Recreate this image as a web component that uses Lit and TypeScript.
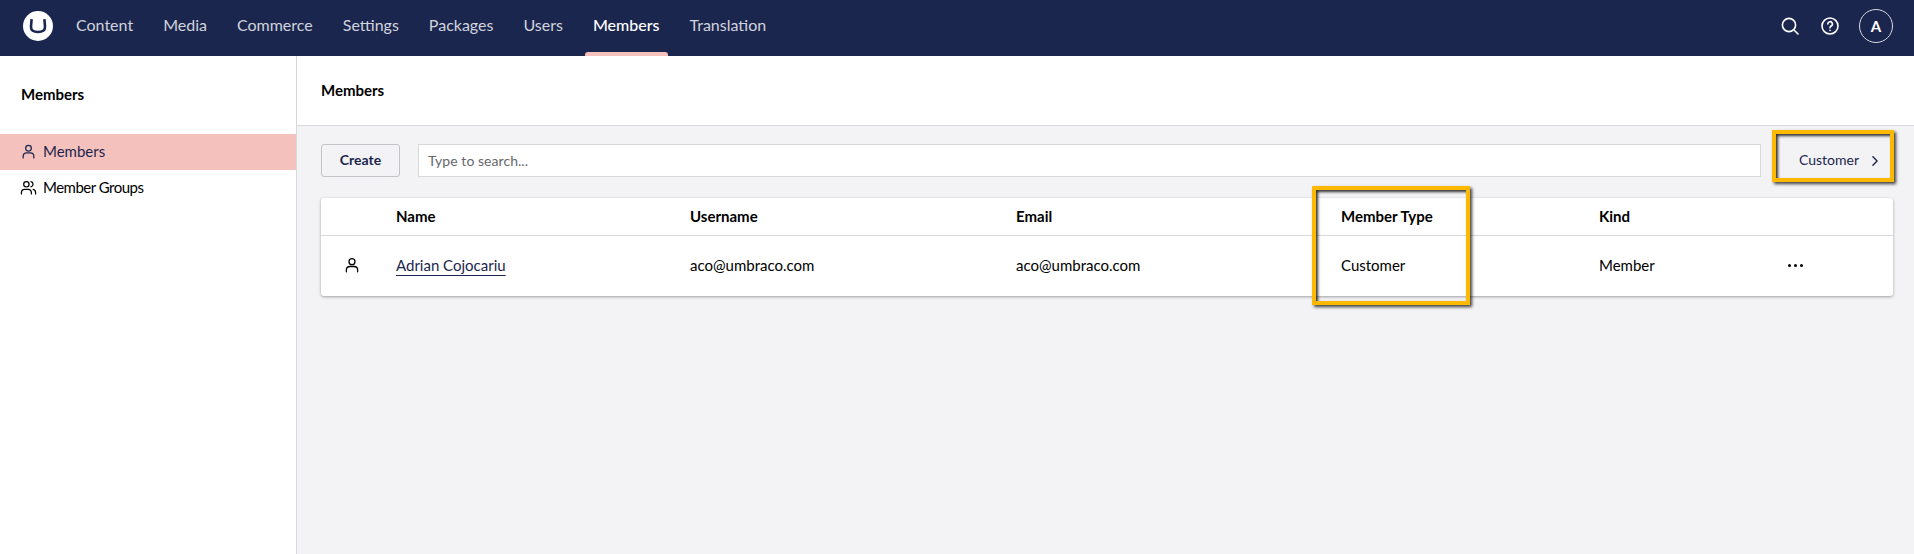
import { LitElement, html, css, svg } from "lit";
import { customElement } from "lit/decorators.js";

const person = svg`<circle cx="12" cy="7.5" r="4"/><path d="M4.5 21v-2.5c0-3 2.5-4.5 5-4.5h5c2.5 0 5 1.500 5 4.500V21"/>`;
const people = svg`<circle cx="9" cy="7.5" r="3.8"/><path d="M2 21v-2c0-3 2.2-4.500 4.500-4.500h5c2.300 0 4.500 1.500 4.500 4.500v2"/><path d="M15.500 3.800a3.800 3.800 0 0 1 0 7.400"/><path d="M18.500 14.600c2 .5 3.500 2 3.500 4.200V21"/>`;

const NAV = ["Content", "Media", "Commerce", "Settings", "Packages", "Users", "Members", "Translation"];
const COLUMNS = ["", "Name", "Username", "Email", "Member Type", "Kind", ""];

@customElement("app-root")
export class AppRoot extends LitElement {
  static override styles = css`
    :host {
      display: flex;
      flex-direction: column;
      height: 554px;
      overflow: hidden;
      font-family: Lato, "Noto Sans", sans-serif;
      font-size: 15px;
      color: #000;
      background: #f3f3f5;
    }
    svg {
      display: block;
      fill: none;
      stroke: currentColor;
      stroke-width: 1.75;
      stroke-linecap: round;
      stroke-linejoin: round;
    }

    /* top bar */
    .topbar {
      height: 56px;
      flex: none;
      display: flex;
      align-items: center;
      background: #1b264f;
      color: #fff;
      padding: 0 21px 4px 23px;
      box-sizing: border-box;
    }
    .logo {
      width: 30px;
      height: 30px;
      margin-right: 8px;
    }
    .logo svg {
      width: 100%;
      height: 100%;
      stroke: none;
    }
    .nav {
      display: flex;
      flex: 1;
      align-self: stretch;
      margin-bottom: -4px;
    }
    .nav-item {
      position: relative;
      display: flex;
      align-items: center;
      padding: 0 15px 7px;
      font-size: 16px;
      color: #d1d4dc;
    }
    .nav-item.active {
      color: #fff;
      font-weight: 500;
    }
    .nav-item.active::after {
      content: "";
      position: absolute;
      left: 7px;
      right: 7px;
      bottom: 0;
      height: 4px;
      background: #f5c1bc;
      border-radius: 3px 3px 0 0;
    }
    .tools {
      display: flex;
      align-items: center;
    }
    .tool {
      width: 18px;
      height: 18px;
      margin-right: 22px;
    }
    .tool svg {
      width: 100%;
      height: 100%;
      stroke-width: 1.6;
    }
    .tool.help {
      margin-right: 20px;
    }
    .avatar {
      width: 34px;
      height: 34px;
      box-sizing: border-box;
      border: 1.5px solid #d8d8de;
      border-radius: 50%;
      display: grid;
      place-items: center;
      font-size: 15px;
      font-weight: 700;
    }

    /* body */
    .main {
      flex: 1;
      display: flex;
      min-height: 0;
    }
    .sidebar {
      width: 297px;
      flex: none;
      box-sizing: border-box;
      background: #fff;
      border-right: 1px solid #d8d7d9;
      padding-top: 29px;
    }
    .sidebar h3 {
      margin: 0 0 31px;
      padding-left: 21px;
      font-size: 15px;
      line-height: 18px;
      font-weight: 700;
    }
    .menu-item {
      display: flex;
      align-items: center;
      height: 36px;
      box-sizing: border-box;
      padding: 0 0 2px 21px;
      color: #000;
    }
    .menu-item svg {
      width: 17px;
      height: 17px;
      margin-left: -1px;
      margin-right: 6px;
      flex: none;
    }
    .menu-item .tight {
      letter-spacing: -0.5px;
    }
    .menu-item.active {
      background: #f5c1bc;
      color: #1b264f;
    }

    .workspace {
      flex: 1;
      min-width: 0;
      display: flex;
      flex-direction: column;
    }
    .ws-header {
      height: 70px;
      flex: none;
      box-sizing: border-box;
      background: #fff;
      border-bottom: 1px solid #d8d7d9;
      padding: 0 24px 2px;
      display: flex;
      align-items: center;
      font-weight: 700;
    }
    .ws-body {
      padding: 18px 21px 0 24px;
    }

    .toolbar {
      display: flex;
      align-items: center;
      height: 33px;
      gap: 18px;
    }
    .create {
      width: 79px;
      height: 33px;
      box-sizing: border-box;
      display: grid;
      place-items: center;
      padding-bottom: 2px;
      background: #f3f3f5;
      border: 1px solid #c4c4c8;
      border-radius: 3px;
      color: #1b264f;
      font-weight: 700;
      font-size: 14px;
    }
    .search {
      flex: 1;
      height: 33px;
      box-sizing: border-box;
      background: #fff;
      border: 1px solid #d8d7d9;
      display: flex;
      align-items: center;
      padding-left: 9px;
      color: #68676b;
      font-size: 14px;
      letter-spacing: 0.05px;
    }
    .type-button {
      position: relative;
      width: 120px;
      height: 33px;
      margin-left: -6px;
      display: flex;
      align-items: center;
      box-sizing: border-box;
      padding: 0 0 2px 26px;
      gap: 11px;
      color: #1b264f;
      font-size: 14px;
    }
    .type-button svg {
      width: 10px;
      height: 10px;
      stroke-width: 1.7;
      margin-top: 2px;
    }

    /* yellow annotation frames drawn over the screenshot */
    .frame {
      position: absolute;
      box-sizing: border-box;
      border: 4.5px solid #fdb900;
      box-shadow: 2px 2px 3px rgba(0, 0, 0, 0.75),
        inset 2px 2px 3px rgba(0, 0, 0, 0.8);
      pointer-events: none;
    }
    .type-button .frame {
      left: -1px;
      right: -1px;
      top: -14px;
      bottom: -5px;
    }

    .table {
      position: relative;
      margin-top: 21px;
      background: #fff;
      border-radius: 3px;
      box-shadow: 0 1px 3px rgba(0, 0, 0, 0.35);
    }
    .row {
      display: grid;
      grid-template-columns: 75px 294px 326px 325px 258px 189px 1fr;
      align-items: center;
    }
    .row.head {
      height: 37px;
      border-bottom: 1px solid #d8d7d9;
      font-weight: 700;
    }
    .row.head div,
    .row.body div {
      margin-top: -2px;
    }
    .row.body {
      height: 60px;
    }
    .row .row-icon {
      padding-left: 22px;
      margin-top: 2px;
    }
    .row-icon svg {
      width: 18px;
      height: 18px;
      stroke-width: 1.7;
    }
    .row a {
      color: #1b264f;
      text-decoration: underline;
      text-underline-offset: 4px;
    }
    .row .dots {
      display: flex;
      gap: 3px;
      margin-top: 1px;
    }
    .dots i {
      width: 3px;
      height: 3px;
      border-radius: 50%;
      background: #000;
    }
    .table .frame {
      left: 991px;
      width: 158px;
      top: -12px;
      height: 119px;
    }
  `;

  override render() {
    return html`
      <header class="topbar">
        <div class="logo">
          <svg viewBox="0 0 30 30">
            <circle cx="15" cy="15" r="15" fill="#fff" />
            <path
              d="M8.500 9.500 8 15.500c-.2 4 2.500 5.500 7 5.500s7.200-1.500 7-5.500l-.5-6"
              fill="none"
              stroke="#1b264f"
              stroke-width="2.6"
              stroke-linecap="square"
            />
          </svg>
        </div>
        <nav class="nav">
          ${NAV.map(
            (n) => html`<div class="nav-item ${n === "Members" ? "active" : ""}">${n}</div>`,
          )}
        </nav>
        <div class="tools">
          <div class="tool">
            <svg viewBox="0 0 18 18"><circle cx="8" cy="8" r="6.600" /><path d="m13 13 4 4" /></svg>
          </div>
          <div class="tool help">
            <svg viewBox="0 0 18 18">
              <circle cx="9" cy="9" r="8" />
              <path d="M6.800 7a2.300 2.300 0 1 1 3.400 2c-.8.500-1.200.9-1.200 1.800" />
              <path d="M9 13.300v.1" />
            </svg>
          </div>
          <div class="avatar">A</div>
        </div>
      </header>
      <div class="main">
        <aside class="sidebar">
          <h3>Members</h3>
          <div class="menu-item active"><svg viewBox="0 0 24 24">${person}</svg>Members</div>
          <div class="menu-item">
            <svg viewBox="0 0 24 24">${people}</svg><span class="tight">Member Groups</span>
          </div>
        </aside>
        <section class="workspace">
          <div class="ws-header">Members</div>
          <div class="ws-body">
            <div class="toolbar">
              <div class="create">Create</div>
              <div class="search">Type to search...</div>
              <div class="type-button">
                Customer
                <svg viewBox="0 0 12 12"><path d="m3.500 1 5 5-5 5" /></svg>
                <div class="frame"></div>
              </div>
            </div>
            <div class="table">
              <div class="row head">${COLUMNS.map((c) => html`<div>${c}</div>`)}</div>
              <div class="row body">
                <div class="row-icon"><svg viewBox="0 0 24 24">${person}</svg></div>
                <div><a>Adrian Cojocariu</a></div>
                <div>aco@umbraco.com</div>
                <div>aco@umbraco.com</div>
                <div>Customer</div>
                <div>Member</div>
                <div class="dots"><i></i><i></i><i></i></div>
              </div>
              <div class="frame"></div>
            </div>
          </div>
        </section>
      </div>
    `;
  }
}
